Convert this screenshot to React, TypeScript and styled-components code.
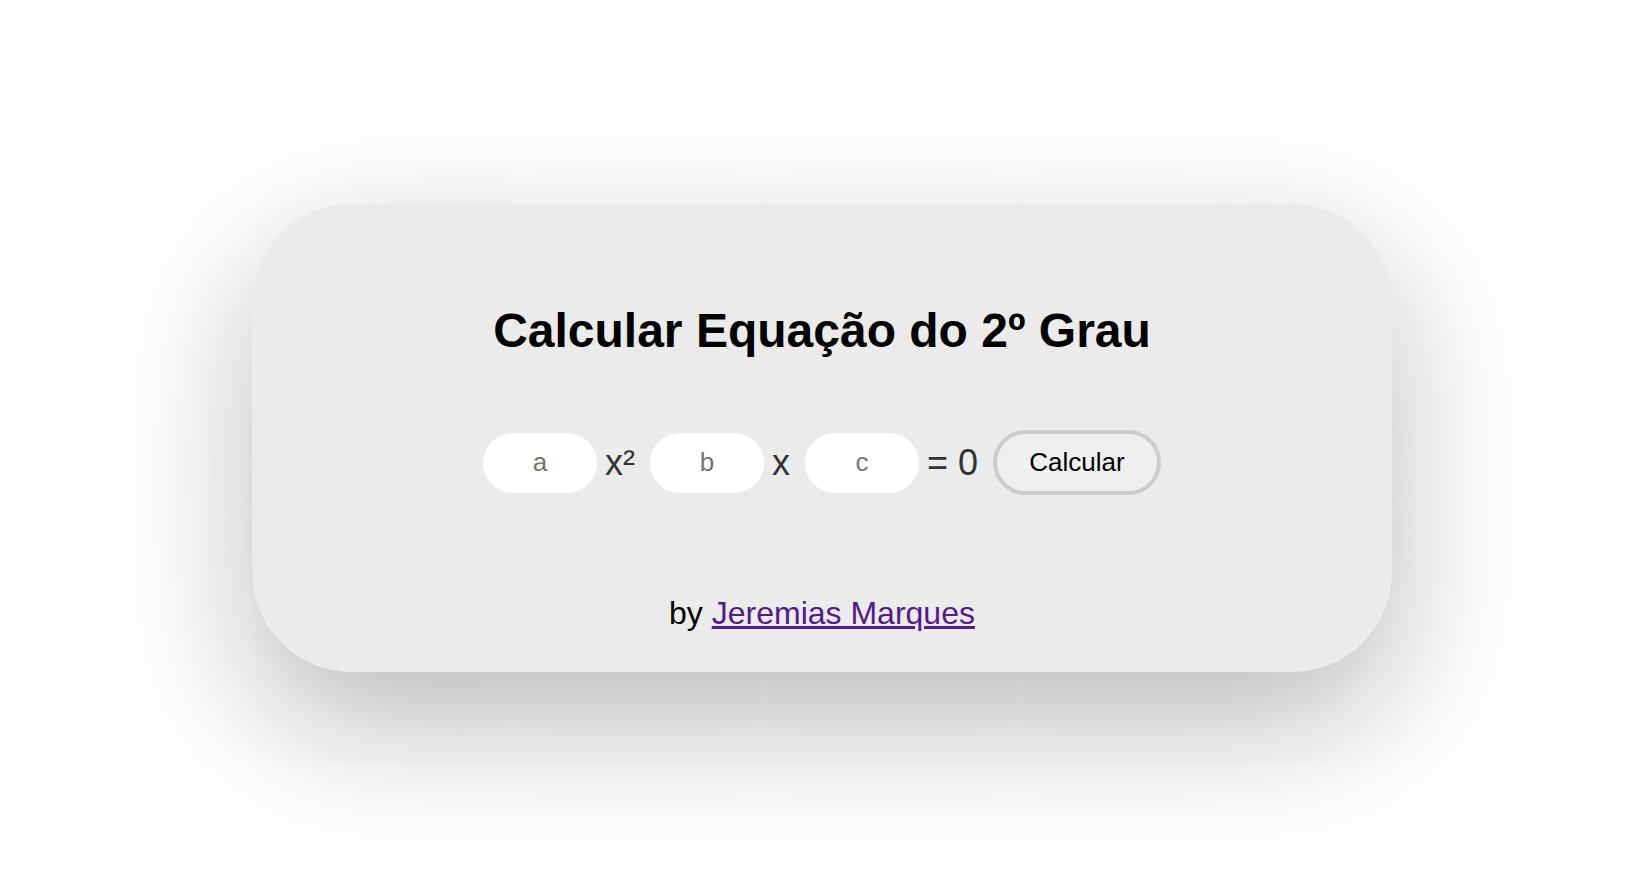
import React from "react";
import styled, { createGlobalStyle } from "styled-components";

const Global = createGlobalStyle`
  html, body {
    margin: 0;
    padding: 0;
    background: #ffffff;
  }
  body {
    font-family: "Liberation Sans", Arial, sans-serif;
  }
`;

const Page = styled.main`
  min-height: 100vh;
  display: flex;
  align-items: center;
  justify-content: center;
`;

const Card = styled.section`
  box-sizing: border-box;
  width: 1140px;
  height: 468px;
  padding: 99px 0 0;
  background: #ebebeb;
  border-radius: 100px;
  box-shadow: 0 50px 140px rgba(0, 0, 0, 0.28);
  display: flex;
  flex-direction: column;
  align-items: center;
`;

const Title = styled.h1`
  margin: 0;
  font-size: 48px;
  font-weight: 700;
  line-height: normal;
  color: #000;
`;

const Row = styled.form`
  margin-top: 72px;
  height: 66px;
  display: flex;
  align-items: center;
`;

const Field = styled.input`
  box-sizing: border-box;
  width: 114px;
  height: 60px;
  border: none;
  outline: none;
  border-radius: 30px;
  background: #ffffff;
  text-align: center;
  font-family: "Liberation Sans", Arial, sans-serif;
  font-size: 26px;
  color: #000;
  padding: 0 8px;
  &::placeholder {
    color: #757575;
  }
`;

const Term = styled.span`
  margin: 0 15px 0 8px;
  font-size: 36px;
  color: #333333;
  line-height: 1;
  white-space: pre;
`;

const Button = styled.button`
  box-sizing: border-box;
  width: 168px;
  height: 65px;
  border: 4px solid #cccccc;
  border-radius: 33px;
  background: #efefef;
  font-family: "Liberation Sans", Arial, sans-serif;
  font-size: 26px;
  color: #000;
  cursor: pointer;
  padding: 0;
`;

const Footer = styled.p`
  margin: 99px 0 0;
  font-size: 32px;
  line-height: normal;
  color: #000;
`;

const Link = styled.a`
  color: #551a8b;
  text-decoration: underline;
`;

export default function App() {
  return (
    <>
      <Global />
      <Page>
        <Card>
          <Title>Calcular Equação do 2º Grau</Title>
          <Row onSubmit={(e) => e.preventDefault()}>
            <Field type="text" placeholder="a" />
            <Term>x²</Term>
            <Field type="text" placeholder="b" />
            <Term>x</Term>
            <Field type="text" placeholder="c" />
            <Term>= 0</Term>
            <Button type="submit">Calcular</Button>
          </Row>
          <Footer>
            by <Link href="#">Jeremias Marques</Link>
          </Footer>
        </Card>
      </Page>
    </>
  );
}
